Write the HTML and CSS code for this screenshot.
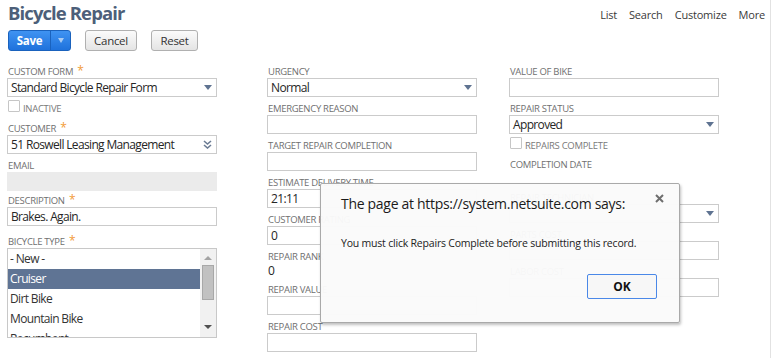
FILE: index.html
```html
<!DOCTYPE html>
<html lang="en">
<head>
  <meta charset="UTF-8">
  <title>Bicycle Repair</title>
  <link rel="stylesheet" href="styles.css">
</head>
<body>
<div class="page">

  <header class="page-head">
    <h1>Bicycle Repair</h1>
    <nav class="head-links">
      <span>List</span>
      <span>Search</span>
      <span>Customize</span>
      <span>More</span>
    </nav>
  </header>

  <!-- Botones de la barra -->
  <div class="toolbar">
    <div class="btn-save">
      <span class="save-label">Save</span>
      <span class="save-menu"><span class="save-caret"></span></span>
    </div>
    <button class="btn btn-cancel">Cancel</button>
    <button class="btn btn-reset">Reset</button>
  </div>

  <div class="form-grid">

    <!-- Columna 1 -->
    <div class="col">
      <div class="group">
        <div class="label">Custom Form <span class="req">*</span></div>
        <div class="field select">Standard Bicycle Repair Form<span class="caret"></span></div>
        <div class="check-row"><span class="checkbox"></span><span class="check-label">Inactive</span></div>
      </div>
      <div class="group">
        <div class="label">Customer <span class="req">*</span></div>
        <div class="field select">51 Roswell Leasing Management
          <svg class="dbl-chevron" width="9" height="9" viewBox="0 0 9 9"><path d="M1 1l3.5 3 3.5-3M1 5l3.5 3 3.5-3" fill="none" stroke="#6b7c94" stroke-width="1.6"/></svg>
        </div>
      </div>
      <div class="group group-tight">
        <div class="label">Email</div>
        <div class="field readonly"></div>
      </div>
      <div class="group">
        <div class="label">Description <span class="req">*</span></div>
        <div class="field">Brakes. Again.</div>
      </div>
      <div class="group group-spaced">
        <div class="label">Bicycle Type <span class="req">*</span></div>
        <div class="listbox">
          <div class="list-items">
            <div class="list-item">- New -</div>
            <div class="list-item selected">Cruiser</div>
            <div class="list-item">Dirt Bike</div>
            <div class="list-item">Mountain Bike</div>
            <div class="list-item">Recumbent</div>
          </div>
          <div class="scrollbar">
            <span class="arrow-up"></span>
            <span class="thumb"></span>
            <span class="arrow-down"></span>
          </div>
        </div>
      </div>
    </div>

    <!-- Columna 2 -->
    <div class="col">
      <div class="group">
        <div class="label">Urgency</div>
        <div class="field select">Normal<span class="caret"></span></div>
      </div>
      <div class="group">
        <div class="label">Emergency Reason</div>
        <div class="field"></div>
      </div>
      <div class="group">
        <div class="label">Target Repair Completion</div>
        <div class="field"></div>
      </div>
      <div class="group">
        <div class="label">Estimate Delivery Time</div>
        <div class="field">21:11</div>
      </div>
      <div class="group">
        <div class="label">Customer Rating</div>
        <div class="field">0</div>
      </div>
      <div class="group">
        <div class="label">Repair Rank</div>
        <div class="value">0</div>
      </div>
      <div class="group">
        <div class="label">Repair Value</div>
        <div class="field"></div>
      </div>
      <div class="group">
        <div class="label">Repair Cost</div>
        <div class="field"></div>
      </div>
    </div>

    <!-- Columna 3 -->
    <div class="col">
      <div class="group">
        <div class="label">Value of Bike</div>
        <div class="field"></div>
      </div>
      <div class="group">
        <div class="label">Repair Status</div>
        <div class="field select">Approved<span class="caret"></span></div>
        <div class="check-row check-row-wide"><span class="checkbox"></span><span class="check-label">Repairs Complete</span></div>
      </div>
      <div class="group">
        <div class="label">Completion Date</div>
        <div class="value"></div>
      </div>
      <div class="group">
        <div class="label">Repair Technician</div>
        <div class="field select"><span class="caret"></span></div>
      </div>
      <div class="group">
        <div class="label">Parts Cost</div>
        <div class="field"></div>
      </div>
      <div class="group">
        <div class="label">Labor Cost</div>
        <div class="field"></div>
      </div>
    </div>

  </div>

  <!-- Aviso del navegador -->
  <div class="dialog">
    <svg class="dialog-close" width="9" height="9" viewBox="0 0 9 9"><path d="M1 1l7 7M8 1l-7 7" stroke="#6e6e6e" stroke-width="2"/></svg>
    <div class="dialog-title">The page at https://system.netsuite.com says:</div>
    <div class="dialog-msg">You must click Repairs Complete before submitting this record.</div>
    <div class="dialog-actions">
      <button class="btn-ok">OK</button>
    </div>
  </div>

</div>
</body>
</html>
```

FILE: styles.css
```css
/* Estilos globales */
body {
  margin: 0;
  font-family: 'Open Sans', 'Liberation Sans', sans-serif;
  color: #262626;
  background-color: #fff;
}

.page {
  position: relative;
  width: 771px;
  height: 358px;
  box-sizing: border-box;
  padding-left: 8px;
  border-right: 1px solid #e2e2e2;
  overflow: hidden;
}

/* Cabecera */
.page-head {
  display: flex;
  justify-content: space-between;
  align-items: flex-start;
}

.page-head h1 {
  margin: 0;
  font-size: 18.5px;
  line-height: 26px;
  font-weight: 700;
  letter-spacing: -0.9px;
  color: #4d5f79;
}

.head-links {
  display: flex;
  gap: 12px;
  padding-top: 7px;
  margin-right: 5px;
  font-size: 11px;
  letter-spacing: -0.2px;
  color: #3a3a3a;
}

/* Barra de botones */
.toolbar {
  display: flex;
  gap: 14px;
  margin-top: 4px;
}

.btn-save {
  display: flex;
  height: 21px;
  box-sizing: border-box;
  border: 1px solid #1a62bd;
  border-radius: 3px;
  background: linear-gradient(#3f93f2, #1f72dc);
  color: #fff;
  font-size: 11.5px;
  font-weight: 700;
  letter-spacing: -0.3px;
  line-height: 19px;
}

.save-label {
  width: 41px;
  text-align: center;
}

.save-menu {
  width: 19px;
  border-left: 1px solid #1a62bd;
  display: flex;
  align-items: center;
  justify-content: center;
}

.save-caret {
  border-left: 3px solid transparent;
  border-right: 3px solid transparent;
  border-top: 5px solid #a9cbf3;
}

.btn {
  height: 21px;
  padding: 0;
  border: 1px solid #b0b0b0;
  border-radius: 3px;
  background: linear-gradient(#fbfbfb, #e4e4e4);
  font-family: inherit;
  font-size: 11.5px;
  letter-spacing: -0.3px;
  color: #333;
}

.btn-cancel {
  width: 52px;
}

.btn-reset {
  width: 47px;
}

/* Formulario */
.form-grid {
  display: grid;
  grid-template-columns: 260px 242px 212px;
  margin-top: 15px;
  margin-left: -1px;
}

.group {
  margin-bottom: 6px;
}

.group-tight {
  margin-bottom: 4px;
}

.group-spaced {
  margin-top: 10px;
}

.label {
  padding-left: 1px;
  font-size: 9.5px;
  line-height: 12px;
  letter-spacing: -0.3px;
  text-transform: uppercase;
  color: #707070;
  white-space: nowrap;
}

.req {
  margin-left: 2px;
  color: #f29b38;
  font-size: 12px;
  line-height: 0;
}

.field {
  position: relative;
  width: 210px;
  height: 19px;
  box-sizing: border-box;
  border: 1px solid #cbcbcb;
  padding: 0 3px;
  font-size: 12px;
  line-height: 17px;
  letter-spacing: -0.65px;
  color: #262626;
  background-color: #fff;
}

.field.readonly {
  border-color: #ebebeb;
  background-color: #ebebeb;
}

.caret {
  position: absolute;
  right: 4px;
  top: 6px;
  border-left: 4px solid transparent;
  border-right: 4px solid transparent;
  border-top: 5px solid #5f7391;
}

.dbl-chevron {
  position: absolute;
  right: 4px;
  top: 4px;
}

.value {
  padding-left: 1px;
  height: 15px;
  font-size: 12px;
  line-height: 15px;
  color: #262626;
}

.check-row {
  display: flex;
  align-items: center;
  margin: 3px 0 11px 1px;
  height: 12px;
}

.check-row-wide {
  margin-bottom: 10px;
}

.checkbox {
  width: 12px;
  height: 12px;
  box-sizing: border-box;
  border: 1px solid #c6c6c6;
  border-radius: 1px;
  background-color: #fff;
}

.check-label {
  margin-left: 3px;
  margin-top: 4px;
  font-size: 9.5px;
  letter-spacing: -0.3px;
  text-transform: uppercase;
  color: #7a7a7a;
}

/* Lista de tipos */
.listbox {
  display: flex;
  width: 210px;
  height: 90px;
  box-sizing: border-box;
  border: 1px solid #c8c8c8;
  overflow: hidden;
}

.list-items {
  flex: 1;
}

.list-item {
  height: 20px;
  padding-left: 2px;
  font-size: 12px;
  line-height: 20px;
  letter-spacing: -0.65px;
  color: #333;
}

.list-item.selected {
  background-color: #5f7494;
  color: #fff;
}

.scrollbar {
  width: 16px;
  display: flex;
  flex-direction: column;
  align-items: center;
  background-color: #f1f1f1;
}

.arrow-up {
  margin-top: 7px;
  border-left: 4px solid transparent;
  border-right: 4px solid transparent;
  border-bottom: 4px solid #a3a3a3;
}

.thumb {
  margin-top: 5px;
  width: 12px;
  height: 35px;
  box-sizing: border-box;
  border: 1px solid #a8a8a8;
  background-color: #c1c1c1;
}

.arrow-down {
  margin-top: auto;
  margin-bottom: 8px;
  border-left: 4px solid transparent;
  border-right: 4px solid transparent;
  border-top: 4px solid #505050;
}

/* Ventana de aviso */
.dialog {
  position: absolute;
  left: 320px;
  top: 183px;
  width: 360px;
  height: 140px;
  box-sizing: border-box;
  padding: 10px 22px 0 20px;
  border: 1px solid #a9a9a9;
  border-radius: 2px;
  background-color: rgba(250, 250, 250, 0.97);
  box-shadow: 1px 2px 3px rgba(0, 0, 0, 0.25);
  display: flex;
  flex-direction: column;
}

.dialog-close {
  position: absolute;
  right: 15px;
  top: 10px;
}

.dialog-title {
  font-size: 14px;
  line-height: 20px;
  letter-spacing: -0.3px;
  color: #1a1a1a;
  white-space: nowrap;
}

.dialog-msg {
  margin-top: 22px;
  font-size: 10.5px;
  line-height: 15px;
  letter-spacing: -0.2px;
  color: #222;
  white-space: nowrap;
}

.dialog-actions {
  display: flex;
  justify-content: flex-end;
  margin-top: 23px;
}

.btn-ok {
  width: 70px;
  height: 25px;
  border: 1px solid #4a88e8;
  border-radius: 2px;
  background-color: #f7f7f7;
  font-family: inherit;
  font-size: 12px;
  font-weight: 700;
  color: #111;
}
```
